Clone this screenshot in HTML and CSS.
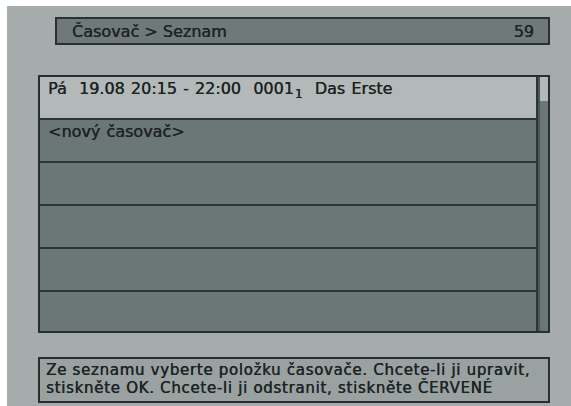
FILE: index.html
```html
<!DOCTYPE html>
<html lang="cs">
<head>
<meta charset="utf-8">
<title>Časovač - Seznam</title>
<link rel="stylesheet" href="styles.css">
</head>
<body>
<div class="screen">
  <div class="header">
    <span class="title">Časovač &gt; Seznam</span>
    <span class="num">59</span>
  </div>
  <div class="list">
    <div class="rows">
      <div class="row sel">Pá  19.08 20:15 - 22:00  0001<span class="sub">1</span>  Das Erste</div>
      <div class="row">&lt;nový časovač&gt;</div>
      <div class="row"></div>
      <div class="row"></div>
      <div class="row"></div>
      <div class="row last"></div>
    </div>
    <div class="scroll"><div class="thumb"></div></div>
  </div>
  <div class="footer">
    <div class="line">Ze seznamu vyberte položku časovače. Chcete-li ji upravit,</div>
    <div class="line">stiskněte OK. Chcete-li ji odstranit, stiskněte ČERVENÉ</div>
  </div>
</div>
</body>
</html>
```
FILE: styles.css
```css
html, body {
  margin: 0;
  padding: 0;
  background: #ffffff;
}
body {
  font-family: "DejaVu Sans", "Liberation Sans", sans-serif;
  color: #1c2424;
}
.screen {
  margin: 6px 0 0 7px;
  width: 564px;
  height: 400px;
  box-sizing: border-box;
  padding: 11px 21px 0 31px;
  background: #a6acac;
  display: flex;
  flex-direction: column;
}
.header {
  margin-left: 17px;
  height: 28px;
  box-sizing: border-box;
  border: 2px solid #283232;
  background: #6f7979;
  display: flex;
  justify-content: space-between;
  align-items: center;
  padding: 0 14px 0 15px;
  font-size: 16px;
  text-shadow: 0.3px 0 0 #1c2424;
}
.list {
  margin-top: 30px;
  height: 258px;
  box-sizing: border-box;
  border: 2px solid #263030;
  display: flex;
  background: #6b7676;
}
.rows {
  flex: 1;
  display: flex;
  flex-direction: column;
}
.row {
  height: 43px;
  flex: none;
  box-sizing: border-box;
  border-bottom: 2px solid #2b3535;
  padding: 3px 8px 0 8px;
  font-size: 16px;
  line-height: 18px;
  white-space: pre;
  word-spacing: 1px;
  background: #6b7676;
  text-shadow: 0.3px 0 0 #1c2424;
}
.row.sel {
  background: #b3b9b9;
}
.row.last {
  flex: 1;
  border-bottom: none;
}
.sub {
  font-size: 12px;
  vertical-align: -4px;
  margin-left: 1px;
}
.scroll {
  width: 12px;
  box-sizing: border-box;
  border-left: 2px solid #2b3535;
  background: #6b7676;
  box-shadow: inset 2px 0 0 #4a5555;
}
.thumb {
  height: 24px;
  margin-left: 2px;
  background: #b3b9b9;
}
.footer {
  margin-top: 24px;
  height: 46px;
  box-sizing: border-box;
  border: 2px solid #263030;
  background: #99a1a1;
  padding: 2px 6px;
  font-size: 15px;
  line-height: 18px;
  letter-spacing: 0.7px;
  white-space: nowrap;
  text-shadow: 0.4px 0 0 #1c2424;
}
```
